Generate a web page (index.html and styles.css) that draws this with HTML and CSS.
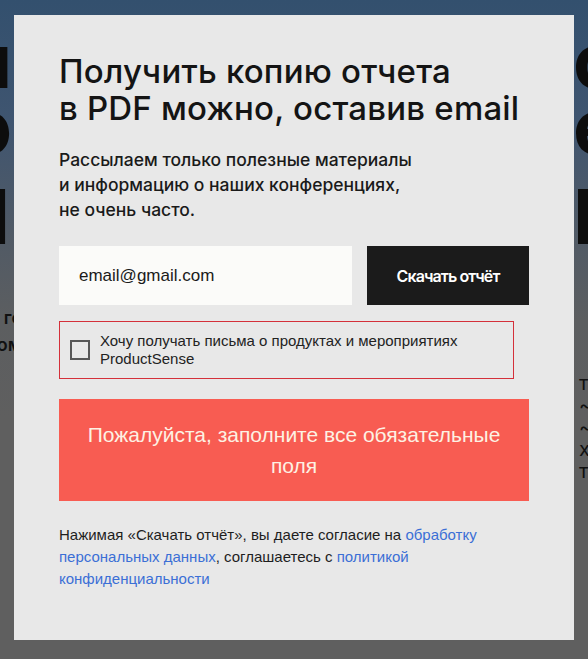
FILE: index.html
```html
<!DOCTYPE html>
<html lang="ru">
<head>
<meta charset="utf-8">
<title>Получить копию отчета</title>
<link rel="stylesheet" href="styles.css">
</head>
<body>
<div class="strip strip-left">
  <span class="big big-1">п</span>
  <span class="big big-2">о</span>
  <span class="big big-3">I</span>
  <span class="small small-1">гс</span>
  <span class="small small-2">ом</span>
</div>
<div class="strip strip-right">
  <span class="big big-1">о</span>
  <span class="big big-2">е</span>
  <span class="big big-3">Е</span>
  <span class="marks">т<br>~<br>~<br>х<br>т</span>
</div>
<div class="modal">
  <h1 class="title">Получить копию отчета<br>в PDF можно, оставив email</h1>
  <p class="subtitle">Рассылаем только полезные материалы<br>и информацию о наших конференциях,<br>не очень часто.</p>
  <form class="form-row">
    <input class="email" type="text" value="email@gmail.com">
    <button class="submit" type="button">Скачать отчёт</button>
  </form>
  <label class="consent">
    <span class="box"></span>
    <span class="consent-text">Хочу получать письма о продуктах и мероприятиях ProductSense</span>
  </label>
  <div class="error">Пожалуйста, заполните все обязательные<br>поля</div>
  <p class="legal">Нажимая «Скачать отчёт», вы даете согласие на <a href="#">обработку персональных данных</a>, соглашаетесь с <a href="#">политикой конфиденциальности</a></p>
</div>
</body>
</html>
```
FILE: styles.css
```css
html, body {
  margin: 0;
  padding: 0;
}
body {
  width: 588px;
  height: 659px;
  overflow: hidden;
  position: relative;
  background: linear-gradient(180deg, #33506e 0px, #3f5570 120px, #505a66 230px, #5c5e60 320px, #5f5f5f 420px, #5f5f5f 659px);
  font-family: "Liberation Sans", Arial, sans-serif;
}
.strip {
  position: absolute;
  top: 0;
  width: 14px;
  height: 659px;
  overflow: hidden;
}
.strip-left { left: 0; }
.strip-right { left: 574px; }
.big {
  position: absolute;
  font-family: Inter, "Noto Sans", sans-serif;
  font-weight: 700;
  font-size: 76px;
  line-height: 76px;
  color: #0d0d0d;
}
.strip-left .big { right: 2px; }
.strip-right .big { left: -1px; }
.strip-left .big-1 { top: 22px; }
.strip-left .big-2 { top: 88px; }
.strip-left .big-3 { top: 178px; right: 4px; }
.strip-right .big-1 { top: 22px; }
.strip-right .big-2 { top: 88px; }
.strip-right .big-3 { top: 178px; }
.small {
  position: absolute;
  right: -8px;
  font-family: Inter, sans-serif;
  font-weight: 600;
  font-size: 18px;
  line-height: 22px;
  color: #111;
}
.small-1 { top: 307px; }
.small-2 { top: 334px; }
.marks {
  position: absolute;
  left: 5px;
  top: 372px;
  font-family: Inter, sans-serif;
  font-size: 20px;
  line-height: 22px;
  color: #111;
}
.modal {
  position: relative;
  margin: 15px 0 0 14px;
  width: 560px;
  height: 625px;
  box-sizing: border-box;
  padding: 38px 45px 0 45px;
  background: #e8e8e8;
}
.title {
  margin: 0;
  font-family: Inter, "Noto Sans", sans-serif;
  font-weight: 500;
  font-size: 33px;
  line-height: 37px;
  letter-spacing: 0.2px;
  color: #141414;
}
.subtitle {
  margin: 20px 0 0;
  font-family: Inter, "Noto Sans", sans-serif;
  font-weight: 500;
  font-size: 17.5px;
  line-height: 25px;
  letter-spacing: 0;
  color: #1a1a1a;
}
.form-row {
  margin: 24px 0 0;
  display: flex;
  gap: 15px;
  height: 59px;
}
.email {
  width: 293px;
  height: 59px;
  box-sizing: border-box;
  border: 0;
  outline: 0;
  padding: 0 20px;
  background: #fbfbf9;
  font-family: "Liberation Sans", Arial, sans-serif;
  font-size: 17px;
  color: #1a1a1a;
}
.submit {
  width: 162px;
  height: 59px;
  border: 0;
  padding: 0;
  background: #1b1b1b;
  color: #ffffff;
  font-family: Inter, "Noto Sans", sans-serif;
  font-weight: 600;
  font-size: 16px;
  letter-spacing: -0.9px;
}
.consent {
  margin-top: 16px;
  width: 455px;
  height: 58px;
  box-sizing: border-box;
  border: 1px solid #d4303a;
  display: flex;
  align-items: center;
  padding: 0 30px 0 10px;
  gap: 10px;
}
.box {
  flex: none;
  width: 20px;
  height: 20px;
  box-sizing: border-box;
  border: 2px solid #575757;
}
.consent-text {
  font-size: 15px;
  line-height: 18px;
  color: #222;
}
.error {
  margin-top: 20px;
  height: 102px;
  box-sizing: border-box;
  padding: 20px 10px;
  background: #f85c52;
  color: #fdf1e3;
  text-align: center;
  font-size: 21px;
  line-height: 31px;
}
.legal {
  margin: 23px 0 0;
  font-size: 15px;
  line-height: 22px;
  color: #1e1e1e;
}
.legal a {
  color: #3b6fd6;
  text-decoration: none;
}
```
